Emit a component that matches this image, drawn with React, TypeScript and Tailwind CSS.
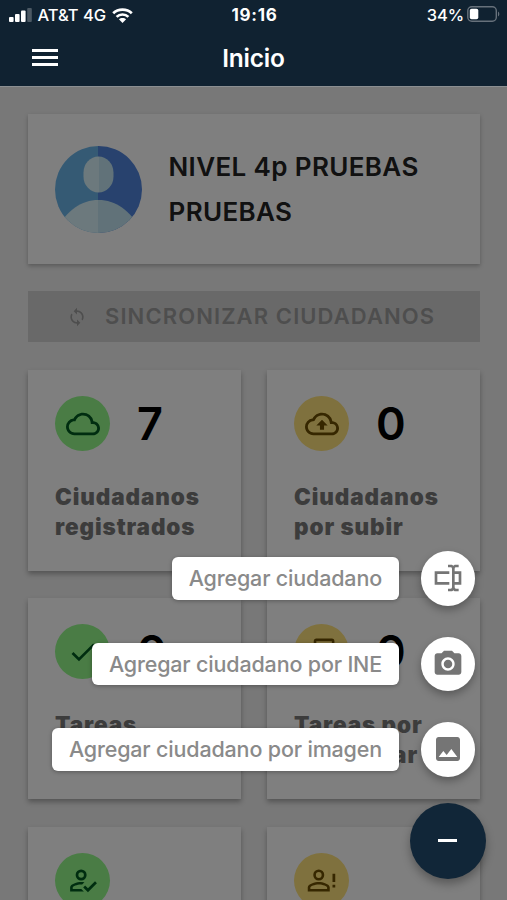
import type { ReactNode } from "react";
import { MdCameraAlt, MdCheck, MdCloudQueue, MdImage, MdOutlineCloudUpload, MdSync } from "react-icons/md";

const LABEL_CLASS = "text-[22.5px] leading-[30px] font-black text-[#787878] mt-[30.5px] tracking-[0.9px] whitespace-pre-line";

function Icon({ d, size }: { d: string; size: number }) {
  return (
    <svg width={size} height={size} viewBox="0 0 24 24" fill="currentColor">
      <path d={d} />
    </svg>
  );
}

const TEXTBOX = "M17 7H22V17H17V19A1 1 0 0 0 18 20H20V22H17.5C16.95 22 16 21.55 16 21C16 21.55 15.05 22 14.5 22H12V20H14A1 1 0 0 0 15 19V5A1 1 0 0 0 14 4H12V2H14.5C15.05 2 16 2.45 16 3C16 2.45 16.95 2 17.5 2H20V4H18A1 1 0 0 0 17 5V7M2 7H13V9H4V15H13V17H2V7M20 15V9H17V15H20Z";
const ACCOUNT_CHECK = "M21.1 12.5L22.5 13.91L15.97 20.5L12.5 17L13.9 15.59L15.97 17.67L21.1 12.5M11 4A4 4 0 1 1 7 8A4 4 0 0 1 11 4M11 6A2 2 0 1 0 13 8A2 2 0 0 0 11 6M11 13C11.68 13 12.5 13.09 13.41 13.26L11.74 14.93L11 14.9C8.03 14.9 4.9 16.36 4.9 17V18.1H11.1L13 20H3V17C3 14.34 8.33 13 11 13Z";
const ACCOUNT_ALERT = "M20 7H22V13H20V7M20 17V15H22V17H20M10 13C12.67 13 18 14.34 18 17V20H2V17C2 14.34 7.33 13 10 13M10 4A4 4 0 0 1 14 8A4 4 0 0 1 10 12A4 4 0 0 1 6 8A4 4 0 0 1 10 4M10 14.9C7.03 14.9 3.9 16.36 3.9 17V18.1H16.1V17C16.1 16.36 12.97 14.9 10 14.9M10 5.9A2.1 2.1 0 0 0 7.9 8A2.1 2.1 0 0 0 10 10.1A2.1 2.1 0 0 0 12.1 8A2.1 2.1 0 0 0 10 5.9Z";
const BOX_MULTIPLE = "M20 16V4H8V16H20M22 16A2 2 0 0 1 20 18H8C6.89 18 6 17.1 6 16V4C6 2.89 6.89 2 8 2H20A2 2 0 0 1 22 4V16M16 20V22H4A2 2 0 0 1 2 20V7H4V20H16Z";

type Stat = { label: string; value: string; tone: "green" | "yellow"; icon: ReactNode };

const stats: Stat[] = [
  { label: "Ciudadanos\nregistrados", value: "7", tone: "green", icon: <MdCloudQueue size={34} /> },
  { label: "Ciudadanos\npor subir", value: "0", tone: "yellow", icon: <MdOutlineCloudUpload size={34} /> },
  { label: "Tareas\ncompletadas", value: "0", tone: "green", icon: <MdCheck size={32} /> },
  { label: "Tareas por\ncompletar", value: "0", tone: "yellow", icon: <Icon d={BOX_MULTIPLE} size={31} /> },
  { label: "", value: "", tone: "green", icon: <Icon d={ACCOUNT_CHECK} size={33} /> },
  { label: "", value: "", tone: "yellow", icon: <Icon d={ACCOUNT_ALERT} size={33} /> },
];

const actions = [
  { label: "Agregar ciudadano", icon: <Icon d={TEXTBOX} size={32} /> },
  { label: "Agregar ciudadano por INE", icon: <MdCameraAlt size={32} /> },
  { label: "Agregar ciudadano por imagen", icon: <MdImage size={32} /> },
];

function StatusBar() {
  return (
    <div className="flex h-[28px] items-center justify-between pl-[9px] pr-[7px] pt-[2px] text-[16.5px] font-medium">
      <div className="flex w-[180px] items-center">
        <svg className="-mt-px shrink-0" width="23" height="14" viewBox="0 0 23 14" fill="white">
          <rect x="0" y="9" width="4.6" height="5" rx="1" />
          <rect x="6" y="6" width="4.6" height="8" rx="1" />
          <rect x="12" y="2.5" width="4.6" height="11.5" rx="1" />
          <rect x="18.2" y="0" width="4.6" height="14" rx="1" opacity=".25" />
        </svg>
        <span className="ml-[5.5px] whitespace-nowrap">AT&amp;T 4G</span>
        <svg className="ml-[6px] shrink-0" width="21" height="15" viewBox="0 0 21 15" fill="none" stroke="white" strokeWidth="2.7">
          <path d="M1.2 5.2C6.2.3 14.8.3 19.8 5.2" />
          <path d="M4.6 8.9C7.8 5.7 13.2 5.7 16.4 8.9" />
          <path d="M10.5 15L6.9 11.3C8.9 9.5 12.1 9.5 14.1 11.3Z" fill="white" stroke="none" />
        </svg>
      </div>
      <span className="pt-px text-[17px] font-bold tracking-[0.7px]">19:16</span>
      <div className="flex w-[180px] items-center justify-end">
        <span className="tracking-[-0.1px]">34%</span>
        <svg className="ml-[3px] -mt-[2px]" width="33" height="16" viewBox="0 0 33 16">
          <rect x=".8" y=".8" width="28.5" height="14.4" rx="4" fill="none" stroke="#67717b" strokeWidth="1.4" />
          <rect x="2.8" y="2.8" width="8.5" height="10.4" rx="1.8" fill="white" />
          <path d="M31 5.5V10.5C32.8 9.5 32.8 6.5 31 5.5Z" fill="#67717b" />
        </svg>
      </div>
    </div>
  );
}

function Header() {
  return (
    <header className="h-[87px] shrink-0 border-b border-[#8b8f92] bg-[#102231] text-white">
      <StatusBar />
      <div className="grid h-[59px] grid-cols-[1fr_auto_1fr] items-center pl-8">
        <div className="flex w-[26px] flex-col gap-[4px]">
          <div className="h-[3px] bg-white" />
          <div className="h-[3px] bg-white" />
          <div className="h-[3px] bg-white" />
        </div>
        <h1 className="pt-px pr-8 text-[24.5px] font-semibold tracking-[-0.2px]">Inicio</h1>
      </div>
    </header>
  );
}

function Avatar() {
  return (
    <svg className="size-[87px] shrink-0" viewBox="0 0 87 87">
      <defs>
        <clipPath id="avatar">
          <circle cx="43.5" cy="43.5" r="43.5" />
        </clipPath>
        <linearGradient id="back">
          <stop offset="50%" stopColor="#6bb5e8" />
          <stop offset="50%" stopColor="#5084dc" />
        </linearGradient>
        <linearGradient id="front">
          <stop offset="50%" stopColor="#d9f2fa" />
          <stop offset="50%" stopColor="#c2e5f2" />
        </linearGradient>
      </defs>
      <g clipPath="url(#avatar)">
        <rect width="87" height="87" fill="url(#back)" />
        <rect x="28.5" y="10.5" width="30" height="36" rx="15" ry="16" fill="url(#front)" />
        <path fill="url(#front)" d="M0 87V84C13 64 26 54 43.5 54C61 54 74 64 87 84V87Z" />
      </g>
    </svg>
  );
}

function StatCard({ stat }: { stat: Stat }) {
  const tone = stat.tone === "green" ? "bg-[#94f98b] text-[#005b20]" : "bg-[#ffe27c] text-[#6c4e00]";
  return (
    <div className="h-[201px] bg-white px-[27px] pt-[26px] shadow-[0_3px_5px_rgba(0,0,0,0.3)]">
      <div className="flex h-[55px] items-center">
        <div className={`flex size-[55px] items-center justify-center rounded-full ${tone}`}>{stat.icon}</div>
        <span className="ml-[27px] text-[45px] font-semibold text-black">{stat.value}</span>
      </div>
      <p className={LABEL_CLASS}>{stat.label}</p>
    </div>
  );
}

export default function App() {
  return (
    <div className="relative flex h-[900px] w-[507px] flex-col overflow-hidden bg-[#f0f0f0] font-['Inter',sans-serif]">
      <Header />
      <main className="relative min-h-0 flex-1 overflow-hidden pr-[27px] pl-[28px] pt-[27px]">
        <section className="flex h-[150px] items-center bg-white pl-[27px] shadow-[0_2px_4px_rgba(0,0,0,0.25)]">
          <Avatar />
          <h2 className="ml-[26.5px] w-[290px] text-[26px] leading-[45px] font-semibold tracking-[0.37px] text-[#222]">NIVEL 4p PRUEBAS PRUEBAS</h2>
        </section>
        <button className="mt-[27px] flex h-[51px] w-full items-center bg-[#d3d3d3] pl-[39px] text-[22px] font-semibold text-[#9c9c9c]">
          <MdSync size={20} />
          <span className="ml-[18px] whitespace-nowrap tracking-[1.1px]">SINCRONIZAR CIUDADANOS</span>
        </button>
        <div className="mt-[28px] grid grid-cols-2 gap-x-[26px] gap-y-[27.4px]">
          {stats.map((stat, i) => (
            <StatCard key={i} stat={stat} />
          ))}
        </div>
        <div className="absolute inset-0 bg-black/50" />
      </main>
      <div className="absolute right-[21.5px] bottom-[21.5px] flex flex-col items-end">
        {actions.map((action) => (
          <div key={action.label} className="mr-[10.5px] mb-[31px] flex h-[54.5px] items-center gap-[22px]">
            <div className="flex h-[42.5px] items-center rounded-[6px] bg-white px-[16.5px] text-[21.5px] font-medium tracking-[-0.17px] whitespace-nowrap text-[#8a8a8a] shadow-[0_1px_4px_rgba(0,0,0,0.3)]">
              {action.label}
            </div>
            <div className="flex size-[54.5px] items-center justify-center rounded-full bg-white text-[#757575] shadow-[0_4px_9px_rgba(0,0,0,0.3)]">
              {action.icon}
            </div>
          </div>
        ))}
        <button className="-mt-[5px] flex size-[76px] items-center justify-center rounded-full bg-[#112638] shadow-[0_5px_10px_rgba(0,0,0,0.3)]">
          <div className="h-[3px] w-[19px] bg-white" />
        </button>
      </div>
    </div>
  );
}
